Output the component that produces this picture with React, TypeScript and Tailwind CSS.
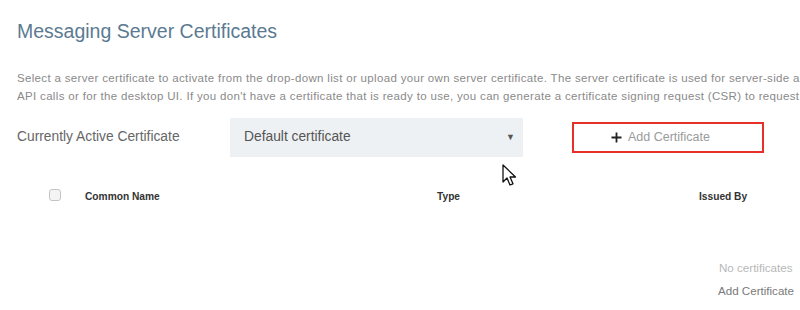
import React from "react";

export default function App() {
  return (
    <div
      className="relative w-[800px] h-[310px] overflow-hidden bg-white"
      style={{ fontFamily: '"Liberation Sans", Arial, sans-serif' }}
    >
      <div className="pl-[17px] pt-[19px]">
        <h1 className="text-[19.5px] leading-[24px] text-[#5b7a92] whitespace-nowrap">
          Messaging Server Certificates
        </h1>
        <div className="mt-[26px] w-[1200px] text-[11.5px] leading-[18px] text-[#8a8a8a] tracking-[0.33px]">
          <div className="whitespace-nowrap">
            Select a server certificate to activate from the drop-down list or upload your own server certificate. The server certificate is used for server-side authentication for
          </div>
          <div className="whitespace-nowrap">
            API calls or for the desktop UI. If you don't have a certificate that is ready to use, you can generate a certificate signing request (CSR) to request a certificate from a CA.
          </div>
        </div>
        <div className="mt-[13px] flex items-center">
          <div className="w-[213px] text-[13.8px] text-[#666]">Currently Active Certificate</div>
          <div className="w-[293px] h-[39px] bg-[#eef1f3] flex items-center justify-between pl-[14px] pr-[8px]">
            <span className="text-[13.8px] text-[#555]">Default certificate</span>
            <span className="text-[9px] text-[#555]">▼</span>
          </div>
          <div className="ml-[49px] w-[192px] h-[31px] border-2 border-[#e8302a] flex items-center pl-[37px] gap-[6px]">
            <svg width="11" height="11" viewBox="0 0 11 11">
              <path d="M5.5 0.5 V10.5 M0.5 5.5 H10.5" stroke="#222" strokeWidth="1.8" />
            </svg>
            <span className="text-[12.5px] text-[#9a9a9a]">Add Certificate</span>
          </div>
        </div>
      </div>

      <div className="mt-[31px] flex items-center h-[16px] pl-[49px] text-[10.2px] font-bold text-[#333]">
        <div className="w-[12px] h-[12px] rounded-[3px] border border-[#c4c4c4] bg-[#f4f4f4] -mt-[3px]" />
        <div className="ml-[24px] w-[352px] pt-[2px]">Common Name</div>
        <div className="w-[262px] pt-[2px]">Type</div>
        <div className="pt-[2px]">Issued By</div>
      </div>

      <div className="mt-[52px] ml-[719px] flex flex-col items-start text-[11.6px]">
        <div className="leading-[23px] text-[#b8b8b8]">No certificates</div>
        <div className="leading-[23px] text-[#7a7a7a] -ml-[1px]">Add Certificate</div>
      </div>

      <svg
        className="absolute left-[502px] top-[164px]"
        width="16"
        height="24"
        viewBox="0 0 16 24"
      >
        <path
          d="M1 1 L1 18 L5 14 L8 21 L11 19.8 L8 13 L13.5 13 Z"
          fill="#fff"
          stroke="#111"
          strokeWidth="1.3"
          strokeLinejoin="round"
        />
      </svg>
    </div>
  );
}
